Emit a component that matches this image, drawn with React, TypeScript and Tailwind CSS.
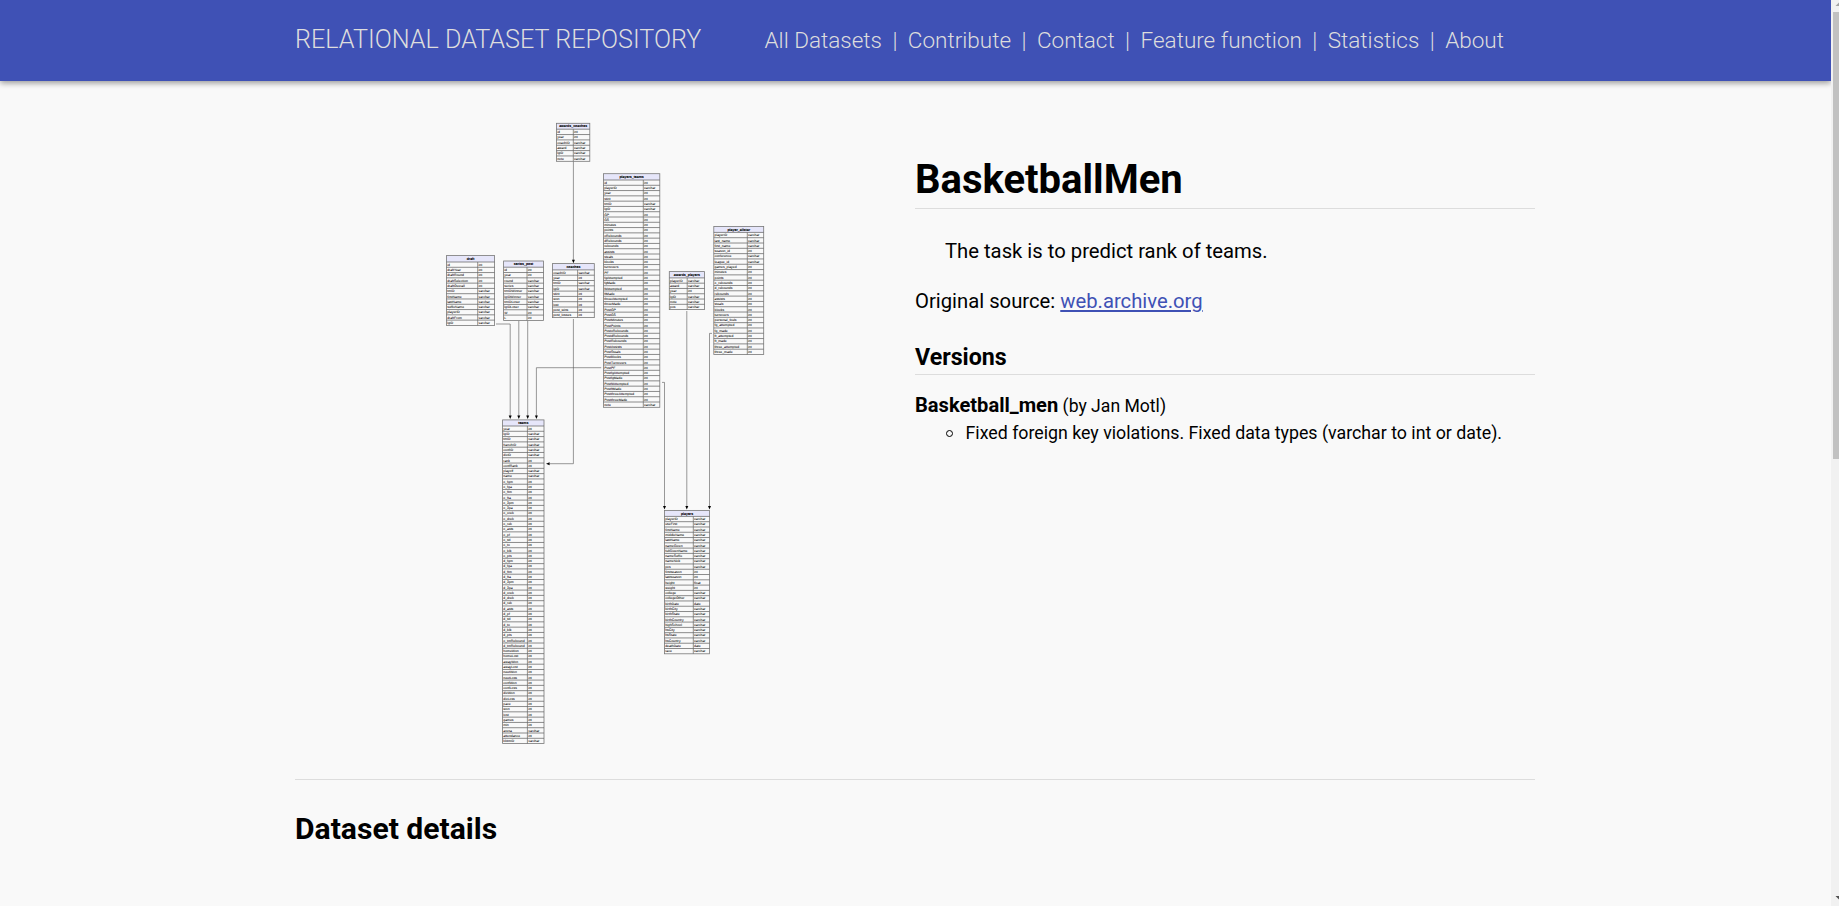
type Table = {
  name: string;
  x: number;
  right: number;
  split: number;
  y: number;
  head: number;
  bottom: number;
  rows: string;
};

// Rows are "name" (int) or "name:type"; ":v" is short for varchar.
const tables: Table[] = [
  { name: 'awards_coaches', x: 556.5, right: 589.8, split: 573.3, y: 123.3, head: 129.2, bottom: 161.3,
    rows: 'id year coachID:v award:v lgID:v note:v' },
  { name: 'draft', x: 446.5, right: 494.6, split: 477.7, y: 255.6, head: 262, bottom: 325.4,
    rows: 'id draftYear draftRound draftSelection draftOverall tmID:v firstName:v lastName:v suffixName:v playerID:v draftFrom:v lgID:v' },
  { name: 'series_post', x: 503.6, right: 543.5, split: 527, y: 261, head: 267.2, bottom: 320.4,
    rows: 'id year round:v series:v tmIDWinner:v lgIDWinner:v tmIDLoser:v lgIDLoser:v W L' },
  { name: 'coaches', x: 552.5, right: 594.3, split: 577.6, y: 263.6, head: 269.9, bottom: 317.6,
    rows: 'coachID:v year tmID:v lgID:v stint won lost post_wins post_losses' },
  { name: 'players_teams', x: 603.5, right: 659.8, split: 643.3, y: 173.7, head: 180, bottom: 407.3,
    rows: 'id playerID:v year stint tmID:v lgID:v GP GS minutes points oRebounds dRebounds rebounds assists steals blocks turnovers PF fgAttempted fgMade ftAttempted ftMade threeAttempted threeMade PostGP PostGS PostMinutes PostPoints PostoRebounds PostdRebounds PostRebounds PostAssists PostSteals PostBlocks PostTurnovers PostPF PostfgAttempted PostfgMade PostftAttempted PostftMade PostthreeAttempted PostthreeMade note:v' },
  { name: 'awards_players', x: 669.3, right: 704.5, split: 687.2, y: 271.6, head: 277.9, bottom: 309.6,
    rows: 'playerID:v award:v year lgID:v note:v pos:v' },
  { name: 'player_allstar', x: 713.8, right: 763.7, split: 747.3, y: 226.5, head: 232.4, bottom: 354.5,
    rows: 'playerID:v last_name:v first_name:v season_id conference:v league_id:v games_played minutes points o_rebounds d_rebounds rebounds assists steals blocks turnovers personal_fouls fg_attempted fg_made ft_attempted ft_made three_attempted three_made' },
  { name: 'teams', x: 502.6, right: 544, split: 527.4, y: 419.9, head: 426, bottom: 743.6,
    rows: 'year lgID:v tmID:v franchID:v confID:v divID:v rank confRank playoff:v name:v o_fgm o_fga o_ftm o_fta o_3pm o_3pa o_oreb o_dreb o_reb o_asts o_pf o_stl o_to o_blk o_pts d_fgm d_fga d_ftm d_fta d_3pm d_3pa d_oreb d_dreb d_reb d_asts d_pf d_stl d_to d_blk d_pts o_tmRebound d_tmRebound homeWon homeLost awayWon awayLost neutWon neutLoss confWon confLoss divWon divLoss pace won lost games min arena:v attendance bbtmID:v' },
  { name: 'players', x: 664.5, right: 709.6, split: 693.3, y: 510.4, head: 516.4, bottom: 653.8,
    rows: 'playerID:v useFirst:v firstName:v middleName:v lastName:v nameGiven:v fullGivenName:v nameSuffix:v nameNick:v pos:v firstseason lastseason height:float weight college:v collegeOther:v birthDate:date birthCity:v birthState:v birthCountry:v highSchool:v hsCity:v hsState:v hsCountry:v deathDate:date race:v' },
];

const edges = [
  'M573.4 161.5V260',
  'M573.4 319V463.7H550',
  'M496 324H510.2V416',
  'M518.8 321V416',
  'M527.7 321V416',
  'M601.2 367.7H536.4V416',
  'M662 382.4H664.5V507',
  'M686.8 311V507',
  'M712 333.4H709.5V507',
];

const downArrows = [
  [573.4, 263.3],
  [510.2, 419],
  [518.8, 419],
  [527.7, 419],
  [536.4, 419],
  [664.5, 509.5],
  [686.8, 509.5],
  [709.5, 509.5],
];

function TableNode({ t }: { t: Table }) {
  const rows = t.rows.split(' ');
  const h = (t.bottom - t.head) / rows.length;
  return (
    <g>
      <rect x={t.x} y={t.y} width={t.right - t.x} height={t.head - t.y} fill="#e6e6fa" />
      <rect x={t.x} y={t.y} width={t.right - t.x} height={t.bottom - t.y} fill="none" stroke="#777" strokeWidth={0.8} />
      <text x={(t.x + t.right) / 2} y={(t.y + t.head) / 2 + 1.1} fontSize={3.5} fontWeight={700} textAnchor="middle" stroke="#000" strokeWidth={0.1}>
        {t.name}
      </text>
      <line x1={t.split} x2={t.split} y1={t.head} y2={t.bottom} stroke="#666" strokeWidth={0.7} />
      {rows.map((row, i) => {
        const [name, type] = row.split(':');
        const y = t.head + i * h;
        return (
          <g key={row}>
            <line x1={t.x} x2={t.right} y1={y} y2={y} stroke="#666" strokeWidth={0.75} />
            <g fontSize={3.4} stroke="#000" strokeWidth={0.04}>
              <text x={t.x + 0.7} y={y + 3.8}>{name}</text>
              <text x={t.split + 0.8} y={y + 3.8}>{type === 'v' ? 'varchar' : type ?? 'int'}</text>
            </g>
          </g>
        );
      })}
    </g>
  );
}

function SchemaDiagram() {
  return (
    <svg
      viewBox="295 121 620 626"
      className="block h-[626px] w-[620px] shrink-0"
      fontFamily="'Liberation Sans', Arial, sans-serif"
      textRendering="geometricPrecision"
      fill="#000"
    >
      {edges.map((d) => (
        <path key={d} d={d} fill="none" stroke="#555" strokeWidth={0.6} />
      ))}
      {downArrows.map(([x, y]) => (
        <path key={`${x}-${y}`} d={`M${x - 1.5} ${y - 3.6}h3L${x} ${y}z`} fill="#000" />
      ))}
      <path d="M546 463.7l3.6 -1.5v3z" fill="#000" />
      {tables.map((t) => (
        <TableNode key={t.name} t={t} />
      ))}
    </svg>
  );
}

const links = ['All Datasets', 'Contribute', 'Contact', 'Feature function', 'Statistics', 'About'];

export default function App() {
  return (
    <div className="flex h-[906px] overflow-hidden bg-[#f9f9f9] font-[Roboto,sans-serif] text-black">
      <div className="flex w-[1831px] shrink-0 flex-col overflow-hidden">
        <header className="h-[81px] shrink-0 bg-[#3f51b5] pl-[295px] text-[#ddd] shadow-[0_2px_6px_rgba(0,0,0,0.4)]">
          <div className="flex h-[80px] w-[1240px] items-center font-light whitespace-nowrap">
            <a className="w-[469.5px] text-[25.16px] leading-[78px]">RELATIONAL DATASET REPOSITORY</a>
            <nav className="flex text-[22.52px] leading-[80px]">
              {links.map((label, i) => (
                <span key={label} className="flex">
                  {i > 0 && <span className="w-[25.8px] text-center">|</span>}
                  <a>{label}</a>
                </span>
              ))}
            </nav>
          </div>
        </header>

        <main className="ml-[295px] w-[1240px] pt-10">
          <section className="flex h-[659px] border-b border-[#ddd]">
            <SchemaDiagram />
            <div className="w-[620px] pt-[32px]">
              <h1 className="h-[56px] border-b border-[#ddd] text-[40px] leading-[54px] font-bold">BasketballMen</h1>
              <p className="mt-[29px] pl-[30px] text-[20.25px] leading-[26px]">The task is to predict rank of teams.</p>
              <p className="mt-6 text-[20.25px] leading-[26px]">
                Original source: <a className="text-[#3f51b5] underline decoration-2 underline-offset-2">web.archive.org</a>
              </p>
              <h2 className="mt-[28px] h-[33px] border-b border-[#ddd] text-[23.2px] leading-[30px] font-bold">Versions</h2>
              <div className="mt-[17px] text-[17.6px] leading-[26px]">
                <b className="text-[20.1px]">Basketball_men</b> (by Jan Motl)
              </div>
              <ul className="flex items-center pt-px pl-[31px]">
                <li className="flex items-center gap-[12.5px] text-[17.77px] leading-[27px] whitespace-nowrap">
                  <span className="size-[7px] rounded-full border border-black" />
                  Fixed foreign key violations. Fixed data types (varchar to int or date).
                </li>
              </ul>
            </div>
          </section>
          <h2 className="mt-[28px] text-[30.1px] leading-[42px] font-bold">Dataset details</h2>
        </main>
      </div>

      <div className="relative h-full w-2 shrink-0 overflow-hidden bg-[#f1f1f1] pt-3 pl-0.5">
        <div className="h-[447px] bg-[#c1c1c1]" />
        <svg className="absolute top-0 left-0 h-[906px] w-2" viewBox="0 0 8 906">
          <path d="M4.5 6L8.5 2L12.5 6z" fill="#a3a3a3" />
          <path d="M4.5 896L8.5 900L12.5 896z" fill="#505050" />
        </svg>
      </div>
    </div>
  );
}
